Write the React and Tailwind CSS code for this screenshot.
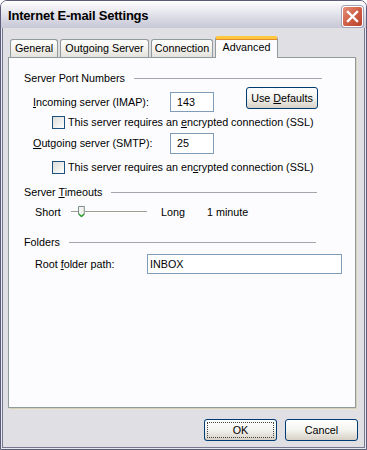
import React from 'react';

// XP-silver style dialog: Internet E-mail Settings > Advanced tab

function Tab({ label, active, width }) {
  if (active) {
    return (
      <div
        className="relative z-10 -mb-px h-[22px] flex items-center justify-center bg-[#fcfcfe] border-x border-[#919b9c] rounded-t-[3px] border-t-[3px] border-t-[#ffc83c] shadow-[inset_0_1px_0_#e68b2c]"
        style={{ width }}
      >
        <span className="mt-[-2px]">{label}</span>
      </div>
    );
  }
  return (
    <div
      className="h-[18px] flex items-center justify-center mr-[2px] border border-b-0 border-[#919b9c] rounded-t-[3px] bg-gradient-to-b from-[#ffffff] via-[#f4f3ee] to-[#e3e2dc] whitespace-nowrap"
      style={{ width }}
    >
      {label}
    </div>
  );
}

function Heading({ children, width }) {
  return (
    <div className="flex items-center h-[14px] pl-[15px]" style={{ width }}>
      <span className="whitespace-nowrap">{children}</span>
      <div className="flex-1 h-px bg-[#a5a5ad] ml-[9px]" />
    </div>
  );
}

function Checkbox({ children }) {
  return (
    <div className="flex items-center h-[13px] pl-[43px]">
      <div className="w-[13px] h-[13px] border border-[#1c5180] bg-gradient-to-br from-[#dcdcd7] to-[#ffffff]" />
      <span className="ml-[3px] whitespace-nowrap">{children}</span>
    </div>
  );
}

function XpButton({ children, width = 73, focus }) {
  return (
    <div
      className="h-[22px] rounded-[3px] border border-[#003c74] bg-gradient-to-b from-[#ffffff] via-[#f3f3ef] to-[#d6d0c5] flex items-center justify-center p-[2px]"
      style={{ width }}
    >
      <div
        className={
          'w-full h-full flex items-center justify-center ' +
          (focus ? 'border border-dotted border-[#444]' : '')
        }
      >
        {children}
      </div>
    </div>
  );
}

function Field({ value, width, pad = 'pl-[6px]', h = 20 }) {
  return (
    <div
      className={'border border-[#7f9db9] bg-white flex items-center ' + pad}
      style={{ width, height: h }}
    >
      {value}
    </div>
  );
}

function SliderThumb() {
  return (
    <svg width="9" height="12" viewBox="0 0 9 12" className="block">
      <path d="M1.5 0.5 H7.5 V8 L4.5 11 L1.5 8 Z" fill="#f4f4f0" stroke="#7c8c8c" />
      <path d="M2 8 L4.5 10.5 L7 8" fill="none" stroke="#21a121" strokeWidth="1.2" />
      <line x1="7" y1="1" x2="7" y2="8" stroke="#c0c0b8" />
    </svg>
  );
}

export default function App() {
  return (
    <div className="w-[367px] h-[450px] overflow-hidden bg-white font-['Liberation_Sans',Arial,sans-serif] text-[10.75px] text-black leading-[13px]">
      <div className="w-full h-full flex flex-col rounded-t-[7px] border border-[#5b5b7a] overflow-hidden">
        {/* Title bar */}
        <div className="h-[27px] shrink-0 flex items-center justify-between pl-[7px] pr-[3px] bg-gradient-to-b from-[#ffffff] via-[#e2e2eb] to-[#c7c7d6]">
          <span className="font-bold text-[13px] tracking-[-0.2px] mt-[1px]">
            Internet E-mail Settings
          </span>
          <div className="w-[21px] h-[21px] rounded-[3px] border border-white bg-gradient-to-br from-[#e6917b] via-[#d05e45] to-[#b8422c] flex items-center justify-center shadow-[0_0_0_1px_#a3a3b8] mt-[3px]">
            <svg width="13" height="13" viewBox="0 0 13 13">
              <path d="M2 2 L11 11 M11 2 L2 11" stroke="#ffffff" strokeWidth="2.4" strokeLinecap="square" />
            </svg>
          </div>
        </div>

        {/* Body with frame */}
        <div className="flex-1 flex flex-col border-x border-b border-[#e8e8ef]">
          <div className="flex-1 flex flex-col border-x border-b border-[#76768f] bg-[#e0dfe3]">
            {/* Tabs */}
            <div className="flex items-end h-[21px] mt-[8px] pl-[7px]">
              <Tab label="General" width={48} />
              <Tab label="Outgoing Server" width={89} />
              <Tab label="Connection" width={62} />
              <Tab label="Advanced" width={63} active />
            </div>

            {/* Panel */}
            <div className="ml-[5px] w-[348px] h-[351px] border border-[#919b9c] bg-[#fcfcfe] shadow-[1px_1px_0_#d4d0c0,2px_2px_0_#e6e4d8] flex flex-col">
              <div className="mt-[13px]">
                <Heading width={313}>Server Port Numbers</Heading>
              </div>

              {/* Incoming */}
              <div className="flex items-start mt-[2px] pl-[24px] h-[24px]">
                <div className="flex items-center h-[20px] mt-[5px]">
                  <span className="w-[137px]">
                    <u>I</u>ncoming server (IMAP):
                  </span>
                  <Field value="143" width={44} />
                </div>
                <div className="ml-[32px]">
                  <XpButton width={72}>
                    Use <u className="ml-[3px]">D</u>efaults
                  </XpButton>
                </div>
              </div>

              <div className="mt-[5px]">
                <Checkbox>
                  This server requires an <u>e</u>ncrypted connection (SSL)
                </Checkbox>
              </div>

              {/* Outgoing */}
              <div className="flex items-center h-[21px] mt-[4px] pl-[24px]">
                <span className="w-[137px]">
                  <u>O</u>utgoing server (SMTP):
                </span>
                <Field value="25" width={44} h={21} />
              </div>

              <div className="mt-[7px]">
                <Checkbox>
                  This server requires an en<u>c</u>rypted connection (SSL)
                </Checkbox>
              </div>

              <div className="mt-[11px]">
                <Heading width={308}>
                  Server <u>T</u>imeouts
                </Heading>
              </div>

              {/* Slider */}
              <div className="flex items-center h-[14px] mt-[6px] pl-[26px]">
                <span className="w-[36px]">Short</span>
                <div className="relative w-[76px] h-[14px] flex items-center">
                  <div className="w-full h-[2px] border-t border-[#9d9d98] bg-white" />
                  <div className="absolute left-[6px] top-[1px]">
                    <SliderThumb />
                  </div>
                </div>
                <span className="ml-[14px] w-[46px]">Long</span>
                <span>1 minute</span>
              </div>

              <div className="mt-[16px]">
                <Heading width={307}>Folders</Heading>
              </div>

              {/* Root folder */}
              <div className="flex items-center h-[20px] mt-[5px] pl-[26px]">
                <span className="w-[112px]">
                  Root <u>f</u>older path:
                </span>
                <Field value="INBOX" width={195} pad="pl-[2px]" />
              </div>
            </div>

            {/* Buttons */}
            <div className="flex justify-end gap-[8px] mt-[11px] pr-[6px]">
              <div className="rounded-[3px] shadow-[inset_0_0_0_2px_#8fb1e8]">
                <XpButton focus>OK</XpButton>
              </div>
              <XpButton>Cancel</XpButton>
            </div>
          </div>
        </div>
      </div>
    </div>
  );
}
